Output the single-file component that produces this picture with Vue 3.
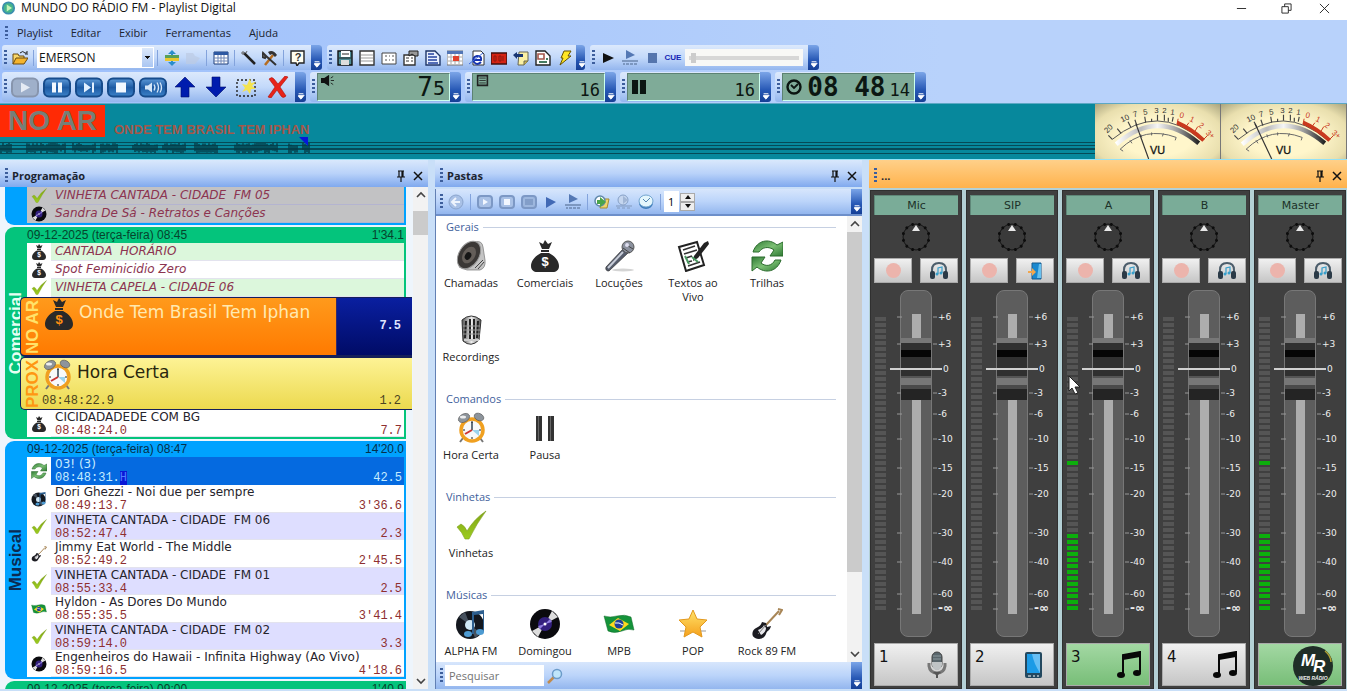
<script setup>
import { ref } from 'vue'

const menus = ['Playlist', 'Editar', 'Exibir', 'Ferramentas', 'Ajuda']
const user = ref('EMERSON')
const query = ref('')
const seek = ref(2)
const copies = ref('1')

const viewTools = [
  ['save', 'Salvar'], ['rows', 'Lista'], ['cells', 'Grade'], ['form', 'Formulário'], ['doc', 'Documento'],
  ['month', 'Calendário'], ['web', 'Internet'], ['red', 'Painel'], ['note', 'Notas'], ['report', 'Relatório'], ['bolt', 'Rápido'],
]
const transport = [
  ['play', 'Tocar'], ['pause', 'Pausar'], ['next', 'Próxima'], ['stop', 'Parar'], ['sound', 'Som'],
]
const listenTools = [
  ['fplay', 'Tocar'], ['fstop', 'Parar'], ['fgrid', 'Cartucheira'], ['playb', 'Ouvir'], ['cueplay', 'Ouvir no cue'],
]
const insertTools = [['refresh', 'Atualizar'], ['refresh2', 'Inserir'], ['time', 'Horário']]
const counters = [
  { icon: 'speaker', big: '7', small: '5' },
  { icon: 'lines', big: '', small: '16' },
  { icon: 'bars', big: '', small: '16' },
  { icon: 'clock', big: '08 48', small: '14' },
]

const pastRows = [
  { icon: 'check', name: 'VINHETA CANTADA - CIDADE  FM 05' },
  { icon: 'vinyl', name: 'Sandra De Sá - Retratos e Canções' },
]
const spots = [
  { icon: 'bag', name: 'CANTADA  HORÁRIO' },
  { icon: 'bag', name: 'Spot Feminicidio Zero' },
  { icon: 'check', name: 'VINHETA CAPELA - CIDADE 06' },
]
const songs = [
  { icon: 'cycle', name: '03! (3)', at: '08:48:31.', len: '42.5', active: true },
  { icon: 'alpha', name: 'Dori Ghezzi - Noi due per sempre', at: '08:49:13.7', len: "3'36.6" },
  { icon: 'check', name: 'VINHETA CANTADA - CIDADE  FM 06', at: '08:52:47.4', len: '2.3', tint: true },
  { icon: 'guitar', name: 'Jimmy Eat World - The Middle', at: '08:52:49.2', len: "2'45.5" },
  { icon: 'check', name: 'VINHETA CANTADA - CIDADE  FM 01', at: '08:55:33.4', len: '2.5', tint: true },
  { icon: 'flag', name: 'Hyldon - As Dores Do Mundo', at: '08:55:35.5', len: "3'41.4" },
  { icon: 'check', name: 'VINHETA CANTADA - CIDADE  FM 02', at: '08:59:14.0', len: '3.3', tint: true },
  { icon: 'vinyl', name: 'Engenheiros do Hawaii - Infinita Highway (Ao Vivo)', at: '08:59:16.5', len: "4'18.6" },
]

const folders = [
  { title: 'Gerais', items: [['cone', 'Chamadas'], ['bag', 'Comerciais'], ['mic', 'Locuções'], ['text', 'Textos ao Vivo'], ['cycle', 'Trilhas'], ['retro', 'Recordings']] },
  { title: 'Comandos', items: [['alarm', 'Hora Certa'], ['pausa', 'Pausa']] },
  { title: 'Vinhetas', items: [['check', 'Vinhetas']] },
  { title: 'Músicas', items: [['alpha', 'ALPHA FM'], ['vinyl', 'Domingou'], ['flag', 'MPB'], ['star', 'POP'], ['guitar', 'Rock 89 FM']] },
]

const channels = ref([
  { name: 'Mic', out: 'phones', num: '1', icon: 'studio', level: 83 },
  { name: 'SIP', out: 'door', num: '2', icon: 'phone', level: 83 },
  { name: 'A', out: 'phones', num: '3', icon: 'music', level: 83, live: true },
  { name: 'B', out: 'phones', num: '4', icon: 'music', level: 83 },
  { name: 'Master', out: 'phones', num: '', icon: '', level: 83, live: true },
])
const scale = [
  ['+6', 27], ['+3', 54], ['0', 79], ['-3', 103], ['-6', 124], ['-10', 149], ['-15', 178],
  ['-20', 204], ['-30', 243], ['-40', 272], ['-60', 304], ['-∞', 319],
]
const ledCount = 49
const isLit = (channel, n) => channel.live && (n > ledCount - 13 || n === ledCount - 24)

const bursts = [[0, 12], [26, 66], [72, 96], [100, 118], [132, 158], [162, 186], [194, 218], [234, 278], [288, 298], [302, 310]]
const wave = bursts.flatMap(([from, to]) => {
  const strokes = []
  for (let x = from; x < to; x += 2) {
    const up = 2 + Math.abs(Math.sin(x * x * 0.37)) * 3
    const down = 2 + Math.abs(Math.cos(x * x * 0.53)) * 3
    strokes.push(`M${x + 1} ${7 - up}V${7 + down}`)
  }
  return strokes
}).join('')
const knobDots = Array.from({ length: 12 }, (_, i) => i * 30)
const meters = [{ x1: 41, y1: 20, x2: 54 }, { x1: 34, y1: 20, x2: 51 }]
const meterMarks = [
  ['20', 15, 27, -45], ['10', 31, 17, -25], ['7', 41, 13, -15], ['5', 51, 11, -8], ['3', 62, 9, 0], ['2', 70, 9, 0], ['1', 78, 11, 8],
]
const meterHot = [['0', 87, 14, 15], ['1', 97, 18, 25], ['2', 106, 24, 35], ['3+', 115, 33, 40]]
</script>

<template>
  <div class="app">
    <svg class="sprite" width="0" height="0" aria-hidden="true">
      <defs>
        <linearGradient id="gGreen" x1="0" y1="0" x2="1" y2="1"><stop offset="0" stop-color="#2f7a34" /><stop offset=".5" stop-color="#7cc074" /><stop offset="1" stop-color="#2f7a34" /></linearGradient>
        <linearGradient id="gLime" x1="0" y1="0" x2="0" y2="1"><stop offset="0" stop-color="#7fa414" /><stop offset="1" stop-color="#9ccc20" /></linearGradient>
        <linearGradient id="gMetal"><stop offset="0" stop-color="#555" /><stop offset=".5" stop-color="#eee" /><stop offset="1" stop-color="#555" /></linearGradient>
        <linearGradient id="gStar" x1="0" y1="0" x2="0" y2="1"><stop offset="0" stop-color="#ffe36a" /><stop offset="1" stop-color="#f5a01c" /></linearGradient>
        <linearGradient id="gBlue" x1="0" y1="0" x2="0" y2="1"><stop offset="0" stop-color="#5d9ad8" /><stop offset=".5" stop-color="#1d5ba4" /><stop offset="1" stop-color="#3c82c8" /></linearGradient>
        <linearGradient id="gArc"><stop offset="0" stop-color="#fff" /><stop offset=".3" stop-color="#bbb" /><stop offset=".5" stop-color="#f5f5f5" /><stop offset=".75" stop-color="#999" /><stop offset="1" stop-color="#222" /></linearGradient>
      </defs>
      <symbol id="i-check" viewBox="0 0 32 32"><path d="M2 17l4-3q4 2 6 7Q19 9 31 1 22 13 14 29h-4Q7 22 2 17z" fill="url(#gLime)" stroke="#7c9d1c" stroke-width=".6" /></symbol>
      <symbol id="i-vinyl" viewBox="0 0 32 32"><circle cx="16" cy="16" r="15" fill="#0a0a0e" /><path d="M16 16L23 3l6 6zM16 16L9 29l-6-6z" fill="#ddd" /><circle cx="16" cy="16" r="7" fill="#33207e" /><path d="M16 16l5-5 2 3zM16 16l-5 5-2-3z" fill="#8f7be0" /><circle cx="16" cy="16" r="1.5" fill="#fff" /></symbol>
      <symbol id="i-bag" viewBox="0 0 32 32"><path d="M10 2l4 2 2-4 3 4 4-2-3 7h-7zM12 10h8v2h-8zM12 13h8c6 3 10 8 10 13 0 4-3 6-6 6H8c-3 0-6-2-6-6 0-5 4-10 10-13z" fill="#292929" /><text x="16" y="26" text-anchor="middle" font-family="Liberation Sans" font-weight="700" font-size="13" fill="currentColor">$</text></symbol>
      <symbol id="i-cycle" viewBox="0 0 32 32"><path d="M2 12C6 0 18-2 26 5l6-3v14H19l4-6c-5-4-12-3-15 2z" fill="url(#gGreen)" stroke="#2a6a2c" /><path d="M30 20C26 32 14 34 6 27l-5 4V17h13l-4 6c5 4 11 3 14-3z" fill="url(#gGreen)" stroke="#2a6a2c" /></symbol>
      <symbol id="i-alpha" viewBox="0 0 32 32"><circle cx="15" cy="17" r="14" fill="#14181f" /><path d="M15 17L4 9l6-5zM15 17l11 8-6 5z" fill="#46515e" /><circle cx="15" cy="17" r="5" fill="#cfe8f6" /><path d="M17 26V4l12-2v22h-1V6l-9 1v19z" fill="#2d5f8f" /><ellipse cx="13" cy="26" rx="4" ry="3" fill="#4d9bd2" /><ellipse cx="25" cy="24" rx="4" ry="3" fill="#4d9bd2" /></symbol>
      <symbol id="i-guitar" viewBox="0 0 32 32"><path d="M15 17L28 3M27 1l4 1-3 5" stroke="#a88657" stroke-width="2" fill="none" /><path d="M2 23c2-4 7-3 9-9l4 1 1 4 4-1c-1 5-4 4-5 8-2 5-7 6-11 4-3-2-3-4-2-7z" fill="#1c1c22" /><path d="M7 22q5-2 6-5l2 3q0 4-5 7z" fill="#e8e8ec" /><path d="M7 26l8-9" stroke="#777" /></symbol>
      <symbol id="i-flag" viewBox="0 0 32 32"><path d="M1 8q6 2 13 0 8-2 14 1l3 13q-6-2-12 1-8 3-14 0z" fill="#15933a" stroke="#0e6b28" stroke-width=".5" /><path d="M6 17l9-7 11 6-9 7z" fill="#ffd91e" /><circle cx="16" cy="16" r="4.5" fill="#20409a" /><path d="M12 15q4-1 8 2" stroke="#fff" fill="none" /></symbol>
      <symbol id="i-star" viewBox="0 0 32 32"><path d="M3 22h26v2H3z" fill="#ccc" /><path d="M16 2l4 9 10 1-7 7 2 10-9-5-9 5 2-10-7-7 10-1z" fill="url(#gStar)" stroke="#e2981d" /></symbol>
      <symbol id="i-pausa" viewBox="0 0 32 32"><path d="M7 4h6v25H7zM19 4h6v25h-6z" fill="#333" /><path d="M9 4h1v25H9zM21 4h1v25h-1z" fill="#666" /></symbol>
      <symbol id="i-alarm" viewBox="0 0 32 32"><path d="M8 26l-3 4M25 26l3 4" stroke="#777" stroke-width="2" /><circle cx="17" cy="18" r="11" fill="#f8f9fa" stroke="#f0a020" stroke-width="3.5" /><ellipse cx="9" cy="6" rx="6" ry="4" transform="rotate(-30 9 6)" fill="#8d949b" stroke="#555" stroke-width=".6" /><ellipse cx="24" cy="5" rx="5" ry="3.5" transform="rotate(25 24 5)" fill="#8d949b" stroke="#555" stroke-width=".6" /><ellipse cx="8" cy="5" rx="3" ry="1.5" fill="#eee" /><path d="M17 18h7v6z" fill="#9bd3ee" /><path d="M17 10v8" stroke="#345" stroke-width="1.5" /><path d="M17 18l-7 4" stroke="#c33" stroke-width="2" /><path d="M17 9v2M17 25v2M8 18h2M24 18h2" stroke="#222" /></symbol>
      <symbol id="i-cone" viewBox="0 0 32 32"><path d="M20 2q7-2 8 5l2 13q1 8-5 10H12l-8-3z" fill="#c4c4c4" stroke="#777" stroke-width=".7" /><ellipse cx="14" cy="15" rx="10" ry="15" transform="rotate(32 14 15)" fill="#3b3836" stroke="#999" /><ellipse cx="14" cy="15" rx="6" ry="9" transform="rotate(32 14 15)" fill="#645e59" /><ellipse cx="13" cy="16" rx="3" ry="4" transform="rotate(32 13 16)" fill="#151515" /><path d="M20 28l8-8M23 29l6-7" stroke="#444" /></symbol>
      <symbol id="i-mic" viewBox="0 0 32 32"><ellipse cx="20" cy="30" rx="11" ry="1.5" fill="#d4d4d4" /><path d="M20 9l5 4L6 31q-4 0-3-4z" fill="#555c6c" stroke="#333" stroke-width=".7" /><path d="M20 12L5 28" stroke="#c8cdd8" stroke-width="2" /><circle cx="25" cy="7" r="6" fill="#8b919e" stroke="#555" /><path d="M20 8l7 5M22 4l8 5" stroke="#444" /><circle cx="24" cy="5" r="2" fill="#dde" /></symbol>
      <symbol id="i-text" viewBox="0 0 32 32"><path d="M2 7l18-5 7 23-18 6z" fill="#fff" stroke="#222" stroke-width="2" /><path d="M6 10l12-4M7 14l13-4M9 18l6-2M10 22l5-1M11 26l12-4" stroke="#333" stroke-width="1.7" /><path d="M16 21l1-5L27 3l4-2 1 3-11 14z" fill="#222" /><path d="M15 17l6 5M8 16l4 8" stroke="#4b9a62" stroke-width="2" /></symbol>
      <symbol id="i-retro" viewBox="0 0 32 32"><path d="M7 6q9-8 19 0l-2 20q-8 8-16 1z" fill="url(#gMetal)" stroke="#333" /><path d="M11 7l-1 17M15 5v20M19 5v20M23 7l-1 17" stroke="#222" stroke-width="2" /><path d="M8 12h17M8 16h17M8 20h17" stroke="#999" /><path d="M9 26h15" stroke="#ccc" stroke-width="2" /></symbol>

      <symbol id="i-logo" viewBox="0 0 16 16"><circle cx="8" cy="8" r="7.5" fill="#3b8fae" /><circle cx="8" cy="8" r="5.5" fill="#46b58b" /><path d="M6 4l6 4-6 4z" fill="#c7f3b8" /></symbol>
      <symbol id="i-open" viewBox="0 0 16 16"><path d="M1 14V4h5l1 2h5v3H5z" fill="#f8d76a" stroke="#6b4b10" /><path d="M1 14l3-6h12l-4 6z" fill="#f5b42c" stroke="#6b4b10" /><path d="M8 3q3-3 5 0h2v-2M13 4h3" stroke="#222" fill="none" /></symbol>
      <symbol id="i-updown" viewBox="0 0 16 16"><path d="M8 0l4 4h-3v3H7V4H4zM8 16l4-4h-3V9H7v3H4z" fill="#2a8ecb" /><path d="M1 5h14v3H1z" fill="#58a05a" /><path d="M1 8h14v3H1z" fill="#e9c62e" /></symbol>
      <symbol id="i-faded" viewBox="0 0 16 16"><path d="M1 3h7l2 3 5 2-5 6H1z" fill="#bccbe2" opacity=".7" /></symbol>
      <symbol id="i-table" viewBox="0 0 16 16"><path d="M1 2h14v12H1z" fill="#fff" stroke="#1d3c78" /><path d="M1 2h14v3H1z" fill="#2d58a2" /><path d="M1 8h14M1 11h14M5 5v9M8 5v9M11 5v9" stroke="#6e87b7" /></symbol>
      <symbol id="i-wand" viewBox="0 0 16 16"><path d="M3 3l11 11" stroke="#222" stroke-width="2.5" /><path d="M2 1v4M0 3h4M6 1l-1 2" stroke="#666" /></symbol>
      <symbol id="i-tools" viewBox="0 0 16 16"><path d="M3 15L11 5" stroke="#b56d20" stroke-width="2.5" /><path d="M6 2q5-3 9 3l-2 2-3-3-2 1z" fill="#333" /><path d="M1 3l3 3-1 2-3-1zM4 6l10 9" stroke="#333" stroke-width="2" fill="#777" /></symbol>
      <symbol id="i-help" viewBox="0 0 16 16"><path d="M1 1h13v12H9l-2 3-1-3H1z" fill="#fffef0" stroke="#222" stroke-width="1.4" /><text x="8" y="11" text-anchor="middle" font-family="Liberation Sans" font-size="11" font-weight="700" fill="#333">?</text></symbol>
      <symbol id="i-save" viewBox="0 0 16 16"><path d="M1 1h14v14H1z" fill="#4f8d96" stroke="#111" stroke-width="1.4" /><path d="M4 1h9v6H4z" fill="#fff" /><path d="M4 10h8v5H4z" fill="#ddd" /><path d="M5 4h7M2 8h12" stroke="#222" /></symbol>
      <symbol id="i-rows" viewBox="0 0 16 16"><path d="M1 1h14v14H1z" fill="#fff" stroke="#333" stroke-width="1.4" /><path d="M2 5h12M2 8h12M2 11h12" stroke="#999" /></symbol>
      <symbol id="i-cells" viewBox="0 0 16 16"><path d="M1 3h14v11H1z" fill="#fff" stroke="#444" /><path d="M4 6h2M8 6h1M11 6h2M4 10h2M8 10h1M11 10h2" stroke="#555" /></symbol>
      <symbol id="i-form" viewBox="0 0 16 16"><path d="M1 5h11v10H1z" fill="#fff" stroke="#333" stroke-width="1.4" /><path d="M3 8h3M8 8h2M3 11h3M8 11h2" stroke="#333" /><path d="M6 1h9v5h-3L9 4 6 6z" fill="#999" stroke="#222" /></symbol>
      <symbol id="i-doc" viewBox="0 0 16 16"><path d="M1 1h9l5 5v9H1z" fill="#e9f0ff" stroke="#1e3568" stroke-width="1.4" /><path d="M3 4h6M3 7h9M3 10h9M3 13h10" stroke="#2341a0" stroke-width="1.4" /></symbol>
      <symbol id="i-month" viewBox="0 0 16 16"><path d="M0 1h16v14H0z" fill="#fff" stroke="#777" /><path d="M0 1h16v3H0z" fill="#5276b6" /><path d="M1 7h14M1 11h14M4 4v10M8 4v10M12 4v10" stroke="#aaa" /><path d="M6 6h6v5H6z" fill="#e0412c" /></symbol>
      <symbol id="i-web" viewBox="0 0 16 16"><path d="M4 1h8l3 3v11H4z" fill="#fff" stroke="#333" /><path d="M12 12q-4 4-7 0-2-5 3-6 5 0 4 4H5" stroke="#1633ae" stroke-width="2" fill="none" /><path d="M0 14L14 3" stroke="#3e68d8" /></symbol>
      <symbol id="i-red" viewBox="0 0 16 16"><path d="M0 3h16v11H0z" fill="#d42314" stroke="#401010" stroke-width="1.4" /><path d="M3 6h2v5H3zM8 6h2v5H8zM12 6v5" stroke="#8f1810" fill="none" /></symbol>
      <symbol id="i-note" viewBox="0 0 16 16"><path d="M6 2h9v9l-4 4H5z" fill="#fbf1a4" stroke="#665" /><path d="M0 5l4-3v2h6v3H4v2z" fill="#173573" /><path d="M11 15v-4h4" fill="#ccb64c" stroke="#665" /></symbol>
      <symbol id="i-report" viewBox="0 0 16 16"><path d="M1 1h9l5 5v9H1z" fill="#fff" stroke="#222" stroke-width="1.4" /><path d="M3 4h6v5H3z" fill="#fff" stroke="#a5564a" stroke-width="1.6" /><path d="M4 12h8M11 9h2" stroke="#467c62" stroke-width="2" /></symbol>
      <symbol id="i-bolt" viewBox="0 0 16 16"><path d="M7 1h7l-3 5h3L3 15l3-7H4z" fill="#ffe624" stroke="#665200" /></symbol>
      <symbol id="i-playk" viewBox="0 0 16 16"><path d="M3 3l11 5-11 5z" fill="#111" /></symbol>
      <symbol id="i-playb" viewBox="0 0 16 16"><path d="M3 3l10 5-10 6z" fill="#4169b5" /></symbol>
      <symbol id="i-cueplay" viewBox="0 0 16 16"><path d="M4 0l9 5-9 4z" fill="#5478b4" /><path d="M0 11h16M1 14h2M4 14h3M8 14h3M12 14h3" stroke="#6c86ae" stroke-width="1.5" /></symbol>
      <symbol id="i-square" viewBox="0 0 16 16"><path d="M4 3h9v10H4z" fill="#5575ad" /></symbol>
      <symbol id="i-up" viewBox="0 0 22 22"><path d="M11 1l10 10h-6v10H7V11H1z" fill="#001cae" stroke="#000e6c" stroke-width=".6" /></symbol>
      <symbol id="i-down" viewBox="0 0 22 22"><path d="M11 21L1 11h6V1h8v10h6z" fill="#001cae" stroke="#000e6c" stroke-width=".6" /></symbol>
      <symbol id="i-area" viewBox="0 0 22 22"><path d="M1 4h18v16H1z" fill="none" stroke="#222" stroke-width="1.4" stroke-dasharray="2 2" /><path d="M14 2l1 5 5-1-4 4 4 3-5 0-1 5-3-4-5 2 3-4-3-4 5 1z" fill="#f3e350" /></symbol>
      <symbol id="i-cross" viewBox="0 0 22 22"><path d="M2 3q3-3 5 0l4 5 7-8 3 1-8 10 6 9q-3 3-5 0l-4-6-6 8-3-1 7-10z" fill="#e8231a" stroke="#ab1008" stroke-width=".6" /></symbol>
      <symbol id="i-play" viewBox="0 0 28 20"><rect x="1" y="1" width="26" height="18" rx="5" fill="#9fb0ca" stroke="#8795ad" stroke-width="2" /><path d="M10 5l9 5-9 5z" fill="#e5ebf4" /></symbol>
      <symbol id="i-pause" viewBox="0 0 28 20"><rect x="1" y="1" width="26" height="18" rx="5" fill="url(#gBlue)" stroke="#174c8c" stroke-width="2" /><path d="M9 5h4v10H9zM15 5h4v10h-4z" fill="#f1f8ff" /></symbol>
      <symbol id="i-next" viewBox="0 0 28 20"><rect x="1" y="1" width="26" height="18" rx="5" fill="url(#gBlue)" stroke="#174c8c" stroke-width="2" /><path d="M9 5l7 5-7 5zM17 5h2v10h-2z" fill="#e1f0ff" /></symbol>
      <symbol id="i-stop" viewBox="0 0 28 20"><rect x="1" y="1" width="26" height="18" rx="5" fill="url(#gBlue)" stroke="#174c8c" stroke-width="2" /><path d="M9 5h10v10H9z" fill="#f1f8ff" /></symbol>
      <symbol id="i-sound" viewBox="0 0 28 20"><rect x="1" y="1" width="26" height="18" rx="5" fill="url(#gBlue)" stroke="#174c8c" stroke-width="2" /><path d="M6 8h3l4-3v10l-4-3H6z" fill="#d4e6f8" /><path d="M15 7q2 3 0 6M18 5q3 5 0 10M21 5q3 5 0 10" stroke="#d4e6f8" fill="none" stroke-width="1.3" /></symbol>
      <symbol id="i-speaker" viewBox="0 0 16 16"><path d="M0 5h4l6-4v14l-6-4H0z" fill="#111" /><path d="M12 5l3-2M12 8h4M12 11l3 2" stroke="#111" /></symbol>
      <symbol id="i-lines" viewBox="0 0 16 16"><path d="M2 2h12v12H2z" fill="none" stroke="#222" stroke-width="2" /><path d="M4 5h8M4 8h8M4 11h8" stroke="#222" /></symbol>
      <symbol id="i-bars" viewBox="0 0 16 16"><path d="M1 1h6v14H1zM9 1h6v14H9z" fill="#0b1511" /></symbol>
      <symbol id="i-clock" viewBox="0 0 16 16"><circle cx="8" cy="8" r="6.5" fill="none" stroke="#0b1511" stroke-width="2.4" /><path d="M5 6l3 3 4-4" fill="none" stroke="#0b1511" stroke-width="1.8" /></symbol>
      <symbol id="i-more" viewBox="0 0 10 10"><path d="M2 2h6M2 4v2l3 3 4-5z" stroke="#fff" fill="#fff" /></symbol>
      <symbol id="i-pin" viewBox="0 0 12 12"><path d="M3 1h6M4 1v6M8 1v6M7 1v6M2 7h8M6 7v5" stroke="#111" stroke-width="1.2" /></symbol>
      <symbol id="i-x" viewBox="0 0 12 12"><path d="M2 2l8 8M10 2l-8 8" stroke="#111" stroke-width="1.5" /></symbol>
      <symbol id="i-back" viewBox="0 0 16 16"><circle cx="8" cy="8" r="7" fill="#a9c1e6" stroke="#8aa4cd" /><path d="M12 8H5M8 4L4 8l4 4" stroke="#eef4fd" stroke-width="2" fill="none" /></symbol>
      <symbol id="i-fplay" viewBox="0 0 16 16"><rect x="1" y="2" width="14" height="12" rx="3" fill="#a9c1e6" stroke="#7c98c5" stroke-width="2" /><path d="M6 5l5 3-5 3z" fill="#f2f7ff" /></symbol>
      <symbol id="i-fstop" viewBox="0 0 16 16"><rect x="1" y="2" width="14" height="12" rx="3" fill="#a9c1e6" stroke="#7c98c5" stroke-width="2" /><path d="M5 5h6v6H5z" fill="#f2f7ff" /></symbol>
      <symbol id="i-fgrid" viewBox="0 0 16 16"><rect x="1" y="2" width="14" height="12" rx="3" fill="#9db7de" stroke="#7c98c5" stroke-width="2" /><path d="M4 6h8M4 8h8M4 10h8" stroke="#6985b3" /></symbol>
      <symbol id="i-refresh" viewBox="0 0 16 16"><path d="M7 5h8l-2 9H6z" fill="#efd56a" stroke="#a58a32" /><circle cx="6" cy="7" r="5" fill="#fff" stroke="#5f87aa" stroke-width="1.5" /><path d="M6 3l6 5-6 5V10H3V6h3z" fill="#4aa54a" /></symbol>
      <symbol id="i-refresh2" viewBox="0 0 16 16"><circle cx="7" cy="6" r="5" fill="#c5d6ef" stroke="#86a0c6" /><path d="M7 2l5 4-5 4z" fill="#a1b6d5" /><path d="M0 12h16M1 14h3M6 14h3M11 14h3" stroke="#8299bd" /></symbol>
      <symbol id="i-time" viewBox="0 0 16 16"><ellipse cx="8" cy="9" rx="7" ry="6" fill="#3e7cba" /><ellipse cx="8" cy="7" rx="7" ry="6" fill="#e4f6fc" stroke="#73a5cf" /><path d="M5 5l3 3 4-4" stroke="#5486b2" fill="none" /></symbol>
      <symbol id="i-lens" viewBox="0 0 16 16"><path d="M1 15l6-6" stroke="#c18c4e" stroke-width="2.5" /><circle cx="10" cy="6" r="4.5" fill="#bfe5fa" stroke="#6b9bc9" stroke-width="1.5" /></symbol>
      <symbol id="i-phones" viewBox="0 0 20 18"><path d="M3 11V8q0-7 7-7t7 7v3" stroke="#4c5d6b" stroke-width="2" fill="none" /><rect x="1" y="9" width="5" height="8" rx="2" fill="#2b3a47" /><rect x="14" y="9" width="5" height="8" rx="2" fill="#2b3a47" /><path d="M9 12V6l4-1v6" stroke="#389fcb" stroke-width="1.2" fill="none" /><circle cx="8" cy="12" r="1.5" fill="#389fcb" /><circle cx="12" cy="11" r="1.5" fill="#389fcb" /></symbol>
      <symbol id="i-door" viewBox="0 0 20 18"><path d="M7 1h9v16H7z" fill="#1988cf" stroke="#165b8e" /><path d="M14 2h2v14h-4z" fill="#68c1ef" /><path d="M3 9h4V6l4 4-4 4v-3H3z" fill="#f2a64d" /></symbol>
      <symbol id="i-studio" viewBox="0 0 28 28"><rect x="9" y="1" width="10" height="17" rx="5" fill="#59666c" stroke="#444" /><path d="M10 5h8M10 8h8" stroke="#8d999e" /><path d="M9 11h10v3q-1 5-5 5t-5-5z" fill="#bfc3c5" /><path d="M6 12v3q1 7 8 7t8-7v-3" stroke="#777" stroke-width="3" fill="none" /><path d="M10 21h8l-3 3v3h-2v-3z" fill="#555" /></symbol>
      <symbol id="i-phone" viewBox="0 0 28 28"><rect x="6" y="1" width="17" height="26" rx="2" fill="#23485f" /><path d="M8 3h13v19H8z" fill="#1c9be6" /><path d="M13 3h8v19q-6-9-8-19z" fill="#67bff4" /><path d="M9 25h3M14 25h2M18 25h2" stroke="#fff" /></symbol>
      <symbol id="i-music" viewBox="0 0 28 28"><path d="M8 24V4l17-3v20" stroke="#080808" stroke-width="2" fill="none" /><path d="M8 4l17-3v5L8 9z" fill="#080808" /><ellipse cx="6" cy="24" rx="4" ry="3" fill="#080808" /><ellipse cx="22" cy="22" rx="4" ry="3" fill="#080808" /></symbol>
    </svg>

    <header class="title">
      <svg class="s16"><use href="#i-logo" /></svg>
      <h1>MUNDO DO RÁDIO FM - Playlist Digital</h1>
      <button class="win" aria-label="Minimizar"><svg viewBox="0 0 12 12"><path d="M1 6h10" /></svg></button>
      <button class="win" aria-label="Restaurar"><svg viewBox="0 0 12 12"><path d="M1 4h7v7H1zM4 4V1h7v7H8" /></svg></button>
      <button class="win" aria-label="Fechar"><svg viewBox="0 0 12 12"><path d="M1 1l10 10M11 1L1 11" /></svg></button>
    </header>

    <nav class="menu">
      <i class="grip"></i>
      <button v-for="m in menus" :key="m">{{ m }}</button>
    </nav>

    <div class="bars">
      <div class="line one">
        <div class="bar files">
          <i class="grip"></i>
          <button aria-label="Abrir"><svg class="s16"><use href="#i-open" /></svg></button>
          <i class="sep"></i>
          <select v-model="user" aria-label="Usuário"><option>EMERSON</option></select>
          <i class="sep"></i>
          <button aria-label="Intervalo"><svg class="s16"><use href="#i-updown" /></svg></button>
          <button aria-label="Inserir" disabled><svg class="s16"><use href="#i-faded" /></svg></button>
          <i class="sep"></i>
          <button aria-label="Tabela"><svg class="s16"><use href="#i-table" /></svg></button>
          <i class="sep"></i>
          <button aria-label="Assistente"><svg class="s16"><use href="#i-wand" /></svg></button>
          <button aria-label="Configurações"><svg class="s16"><use href="#i-tools" /></svg></button>
          <i class="sep"></i>
          <button aria-label="Ajuda"><svg class="s16"><use href="#i-help" /></svg></button>
          <button class="more" aria-label="Mais opções"><svg><use href="#i-more" /></svg></button>
        </div>
        <div class="bar views">
          <i class="grip"></i>
          <button v-for="[icon, label] in viewTools" :key="icon" :aria-label="label"><svg class="s16"><use :href="'#i-' + icon" /></svg></button>
          <button class="more" aria-label="Mais opções"><svg><use href="#i-more" /></svg></button>
        </div>
        <div class="bar cue">
          <i class="grip"></i>
          <button aria-label="Ouvir"><svg class="s16"><use href="#i-playk" /></svg></button>
          <button aria-label="Ouvir no cue"><svg class="s16"><use href="#i-cueplay" /></svg></button>
          <button aria-label="Parar"><svg class="s16"><use href="#i-square" /></svg></button>
          <button class="cuebtn">CUE</button>
          <input v-model="seek" class="seek" type="range" min="0" max="100" aria-label="Posição">
          <button class="more" aria-label="Mais opções"><svg><use href="#i-more" /></svg></button>
        </div>
      </div>
      <div class="line two">
        <div class="bar deckbar">
          <i class="grip"></i>
          <button v-for="[icon, label] in transport" :key="icon" :aria-label="label"><svg class="pill"><use :href="'#i-' + icon" /></svg></button>
          <button aria-label="Subir"><svg class="s22"><use href="#i-up" /></svg></button>
          <button aria-label="Descer"><svg class="s22"><use href="#i-down" /></svg></button>
          <button aria-label="Selecionar"><svg class="s22"><use href="#i-area" /></svg></button>
          <button aria-label="Remover"><svg class="s22"><use href="#i-cross" /></svg></button>
          <button class="more" aria-label="Mais opções"><svg><use href="#i-more" /></svg></button>
        </div>
        <div v-for="c in counters" :key="c.icon" class="bar">
          <i class="grip"></i>
          <output class="lcd" :class="c.icon">
            <svg class="s16"><use :href="'#i-' + c.icon" /></svg>
            <span v-if="c.big" class="big">{{ c.big }}</span><span class="small">{{ c.small }}</span>
          </output>
          <button class="more" aria-label="Mais opções"><svg><use href="#i-more" /></svg></button>
        </div>
      </div>
    </div>

    <section class="onair">
      <div class="playing">
        <p><strong>NO AR</strong><span>ONDE TEM BRASIL TEM IPHAN</span></p>
        <div class="waveform">
          <svg class="wave" viewBox="0 0 310 14"><path :d="wave" stroke="#053b46" stroke-width="1.4" /></svg>
          <svg class="marker" viewBox="0 0 12 12"><path d="M0 0h9v9z" fill="#0618d8" /></svg>
        </div>
      </div>
      <svg v-for="(m, i) in meters" :key="i" class="vu" viewBox="0 0 126 56">
        <path d="M17 36Q63 -2 108 37" fill="none" stroke="#555" stroke-width="1" />
        <path d="M17 36l-4-4M26 30l-4-5M36 24l-3-6M42 22l-2-6M51 19l-1-6M57 18v-3M63 17v-6M70 17v-6M74 18v-4M78 18l1-5" stroke="#444" stroke-width="1.2" />
        <path d="M83 19Q97 25 110 37" fill="none" stroke="#c9391e" stroke-width="4" />
        <path d="M83 20l1-5M92 23l3-4M101 28l3-5M110 36l4-4" stroke="#c9391e" />
        <path d="M21 41Q63 4 105 40" fill="none" stroke="url(#gArc)" stroke-width="4.5" />
        <path d="M25 46Q50 22 82 34" fill="none" stroke="#666" stroke-width="1" />
        <path d="M25 46l3 2M35 37l2 3M46 31l1 3M57 29v3M69 30l-1 3M82 34l-1 3" stroke="#666" />
        <path :d="`M${m.x1} ${m.y1}L${m.x2} 56`" stroke="#333" stroke-width="1.2" />
        <text v-for="[t, x, y, a] in meterMarks" :key="t" :x="x" :y="y" :transform="`rotate(${a} ${x} ${y})`" class="mark">{{ t }}</text>
        <text v-for="[t, x, y, a] in meterHot" :key="t" :x="x" :y="y" :transform="`rotate(${a} ${x} ${y})`" class="mark hot">{{ t }}</text>
        <text x="63" y="51" class="vulabel">VU</text>
      </svg>
    </section>

    <main class="panels">
      <section class="panel">
        <header class="phead"><i class="grip"></i><h2>Programação</h2>
          <button aria-label="Fixar"><svg><use href="#i-pin" /></svg></button><button aria-label="Fechar painel"><svg><use href="#i-x" /></svg></button>
        </header>
        <div class="schedule">
          <div class="blocks">
            <article class="block music past">
              <div class="rail"></div>
              <div class="rows">
                <div v-for="r in pastRows" :key="r.name" class="row">
                  <svg class="s16"><use :href="'#i-' + r.icon" /></svg><div class="cell"><p class="played">{{ r.name }}</p></div>
                </div>
              </div>
            </article>
            <article class="block ads">
              <div class="rail"><span>Comercial</span></div>
              <div class="rows">
                <h3>09-12-2025 (terça-feira) 08:45<span>1'34.1</span></h3>
                <div v-for="(r, i) in spots" :key="r.name" class="row">
                  <svg class="s16"><use :href="'#i-' + r.icon" /></svg><div class="cell" :class="{ mint: i !== 1 }"><p class="played">{{ r.name }}</p></div>
                </div>
                <div class="card now">
                  <b>NO AR</b>
                  <svg class="s32"><use href="#i-bag" /></svg><p>Onde Tem Brasil Tem Iphan</p>
                  <div class="left"><time>7.5</time></div>
                </div>
                <div class="card soon">
                  <b>PROX</b>
                  <svg class="s32"><use href="#i-alarm" /></svg><p>Hora Certa</p>
                  <div class="times"><time>08:48:22.9</time><time>1.2</time></div>
                </div>
                <div class="row">
                  <svg class="s16"><use href="#i-bag" /></svg>
                  <div class="cell"><p>CICIDADADEDE COM BG</p><div class="times"><time>08:48:24.0</time><time>7.7</time></div></div>
                </div>
              </div>
            </article>
            <article class="block music">
              <div class="rail"><span>Musical</span></div>
              <div class="rows">
                <h3>09-12-2025 (terça-feira) 08:47<span>14'20.0</span></h3>
                <div v-for="s in songs" :key="s.at" class="row">
                  <svg class="s16"><use :href="'#i-' + s.icon" /></svg>
                  <div class="cell" :class="{ tint: s.tint, active: s.active }">
                    <p>{{ s.name }}</p>
                    <div class="times"><time>{{ s.at }}<mark v-if="s.active">H</mark></time><time>{{ s.len }}</time></div>
                  </div>
                </div>
              </div>
            </article>
            <article class="block ads">
              <div class="rail"></div>
              <div class="rows"><h3>09-12-2025 (terça-feira) 09:00<span>1'40.9</span></h3></div>
            </article>
          </div>
          <div class="scroll top"><svg viewBox="0 0 12 12"><path d="M2 8l4-4 4 4" /></svg><i></i><svg viewBox="0 0 12 12"><path d="M2 4l4 4 4-4" /></svg></div>
        </div>
      </section>

      <section class="panel">
        <header class="phead"><i class="grip"></i><h2>Pastas</h2>
          <button aria-label="Fixar"><svg><use href="#i-pin" /></svg></button><button aria-label="Fechar painel"><svg><use href="#i-x" /></svg></button>
        </header>
        <div class="folders">
          <div class="fbar">
            <i class="grip"></i>
            <button aria-label="Voltar"><svg class="s16"><use href="#i-back" /></svg></button>
            <i class="sep"></i>
            <button v-for="[icon, label] in listenTools" :key="icon" :aria-label="label"><svg class="s16"><use :href="'#i-' + icon" /></svg></button>
            <i class="sep"></i>
            <button v-for="[icon, label] in insertTools" :key="icon" :aria-label="label"><svg class="s16"><use :href="'#i-' + icon" /></svg></button>
            <i class="sep"></i>
            <input v-model="copies" type="text" aria-label="Quantidade">
            <span class="spin">
              <button aria-label="Aumentar"><svg viewBox="0 0 8 4"><path d="M4 0l3 4H1z" /></svg></button>
              <button aria-label="Diminuir"><svg viewBox="0 0 8 4"><path d="M4 4l3-4H1z" /></svg></button>
            </span>
            <button class="more" aria-label="Mais opções"><svg><use href="#i-more" /></svg></button>
          </div>
          <div class="fbody">
            <div class="groups">
              <section v-for="g in folders" :key="g.title" class="group">
                <h3>{{ g.title }}</h3>
                <div class="items">
                  <button v-for="[icon, label] in g.items" :key="label"><svg class="s32"><use :href="'#i-' + icon" /></svg><span>{{ label }}</span></button>
                </div>
              </section>
            </div>
            <div class="scroll long"><svg viewBox="0 0 12 12"><path d="M2 8l4-4 4 4" /></svg><i></i><svg viewBox="0 0 12 12"><path d="M2 4l4 4 4-4" /></svg></div>
          </div>
          <div class="fbar find">
            <i class="grip"></i>
            <input v-model="query" class="search" type="text" placeholder="Pesquisar" aria-label="Pesquisar">
            <button aria-label="Buscar"><svg class="s16"><use href="#i-lens" /></svg></button>
            <button class="more" aria-label="Mais opções"><svg><use href="#i-more" /></svg></button>
          </div>
        </div>
      </section>

      <section class="panel mixer">
        <header class="phead hot"><i class="grip"></i><h2>...</h2>
          <button aria-label="Fixar"><svg><use href="#i-pin" /></svg></button><button aria-label="Fechar painel"><svg><use href="#i-x" /></svg></button>
        </header>
        <div class="strips">
          <article v-for="c in channels" :key="c.name" class="strip">
            <h3>{{ c.name }}</h3>
            <svg class="knob" viewBox="0 0 30 30">
              <circle cx="15" cy="15" r="13" fill="#3a3a3a" stroke="#151515" />
              <circle v-for="a in knobDots" :key="a" cx="15" cy="2" r="1.5" fill="#0c0c0c" :transform="`rotate(${a + 15} 15 15)`" />
              <path d="M15 3l4 6h-8z" fill="#e8e8e8" />
            </svg>
            <div class="pair">
              <button :aria-label="'Gravar ' + c.name"><i class="rec"></i></button>
              <button :aria-label="'Saída ' + c.name"><svg><use :href="'#i-' + c.out" /></svg></button>
            </div>
            <div class="level">
              <div class="leds"><i v-for="n in ledCount" :key="n" :class="{ lit: isLit(c, n) }"></i></div>
              <div class="track">
                <input v-model="c.level" class="fader" type="range" min="0" max="100" :aria-label="'Volume ' + c.name">
              </div>
              <svg class="scale" viewBox="0 0 60 347">
                <g v-for="[t, y] in scale" :key="t">
                  <path :d="`M0 ${y}h5M36 ${y}h4`" stroke="#999" />
                  <text :x="t === '0' ? 46 : 41" :y="y + 3" :class="{ inf: t === '-∞' }">{{ t }}</text>
                </g>
              </svg>
            </div>
            <button class="cart" :class="{ live: c.live }" :aria-label="'Canal ' + c.name">
              <span>{{ c.num }}</span>
              <svg v-if="c.icon"><use :href="'#i-' + c.icon" /></svg>
              <svg v-else class="badge" viewBox="0 0 40 40"><circle cx="20" cy="20" r="20" fill="#202e27" /><path d="M32 5q6 5 6 11" stroke="#b0a232" stroke-width="1.5" fill="none" /><text x="8" y="20" class="mr">M</text><text x="20" y="26" class="mr">R</text><text x="20" y="34" class="web">WEB RÁDIO</text></svg>
            </button>
          </article>
        </div>
        <svg class="pointer" viewBox="0 0 12 20"><path d="M1 1v15l3-3 3 6 3-1-3-6h5z" fill="#fff" stroke="#222" /></svg>
      </section>
    </main>
  </div>
</template>

<style>
html, body { margin: 0; background: #b5d3f3; }
body { overflow: hidden; }
</style>

<style scoped>
.app { display: flex; flex-direction: column; height: 100vh; overflow: hidden; background: linear-gradient(90deg, #9dbffb, #b8d2fb 70%); font: 11px/14px "Open Sans", "Noto Sans", sans-serif; color: #1c2430; }
.app * { box-sizing: border-box; }
.sprite { position: absolute; }
h1, h2, h3, p { margin: 0; font-size: inherit; font-weight: inherit; }
button { display: flex; align-items: center; justify-content: center; padding: 0; border: 0; background: none; font: inherit; color: inherit; }
i { font-style: normal; }
.s16 { width: 16px; height: 16px; flex: none; }
.s22 { width: 22px; height: 22px; }
.s32 { width: 32px; height: 32px; flex: none; color: #fff; }

.title { display: flex; align-items: center; height: 20px; padding: 0 8px 4px 1px; background: #fff; color: #111; flex: none; }
.title h1 { flex: 1; padding-left: 5px; font-size: 12px; line-height: 16px; }
.title .s16 { width: 15px; height: 14px; }
.win { width: 45px; }
.win:last-child { width: 30px; }
.win svg { width: 11px; height: 11px; fill: none; stroke: #222; }

.grip { width: 3px; height: 16px; flex: none; background: repeating-linear-gradient(#3d5e9c 0 2px, transparent 2px 4px); margin: 0 2px; }
.menu { display: flex; align-items: center; height: 25px; padding: 0 3px; flex: none; }
.menu button { padding: 0 9px; }
.menu .grip { height: 13px; margin-right: 0; }

.bars { padding-left: 2px; flex: none; }
.line { display: flex; gap: 5px; }
.one { height: 27px; padding-bottom: 2px; }
.two { height: 31px; gap: 4px; padding-bottom: 1px; }
.bar { display: flex; align-items: center; border-radius: 3px; background: linear-gradient(#dce9fc, #c3d9fa 50%, #94b6ee); overflow: hidden; }
.bar > button { flex: none; width: 22px; }
.sep { width: 1px; height: 16px; margin: 0 3px; background: #83a3dc; flex: none; }
.bar .more, .fbar .more { width: 11px; height: 100%; flex: none; align-items: flex-end; margin-left: auto; background: linear-gradient(#7ba5e8, #2758b5 60%, #163f95); }
.more svg { width: 8px; height: 8px; margin-bottom: 2px; }
.files { width: 320px; }
.files > button { width: 21px; }
.files select { flex: none; width: 117px; height: 21px; padding: 0 2px; border: 0; border-radius: 0; font: inherit; font-size: 12px; color: #111; appearance: none; background: linear-gradient(#111, #111) 108px 9px / 5px 1px no-repeat, linear-gradient(#111, #111) 109px 10px / 3px 1px no-repeat, linear-gradient(#111, #111) 110px 11px / 1px 1px no-repeat, linear-gradient(#dce8fa, #aac6f2) 105px 1px / 11px 19px no-repeat, #fff; }
.views { width: 258px; }
.cue { width: 229px; }
.cuebtn { color: #1524b4; font: 700 8px/12px "Liberation Sans", sans-serif; }
.bar > .cuebtn { width: 20px; }
.seek { appearance: none; width: 118px; height: 17px; margin: 0 0 0 2px; padding: 0 4px; background: linear-gradient(#d7d7d7, #d7d7d7) 50% 50% / 110px 4px no-repeat, #f8f8f6; }
.seek::-webkit-slider-thumb { appearance: none; width: 5px; height: 10px; background: #ccc; }
.deckbar { width: 304px; }
.deckbar > button { width: 32px; }
.deckbar > button:nth-of-type(n+6) { width: 31px; }
.pill { width: 28px; height: 21px; }
.deckbar > .more:last-child { width: 11px; }
.lcd { display: flex; align-items: center; width: 133px; height: 28px; padding: 0 4px 0 3px; background: #7fab98; border: 1px solid #5c8273; border-right-color: #cfe; border-bottom-color: #cfe; color: #0c1712; font-family: "DejaVu Sans Mono", monospace; }
.lcd .s16 { margin-right: auto; }
.speaker .s16, .lines .s16 { width: 13px; height: 13px; align-self: flex-start; }
.big { font-size: 26px; line-height: 26px; white-space: pre; }
.small { align-self: flex-end; font-size: 17px; line-height: 20px; }
.speaker .small { font-size: 20px; line-height: 24px; }
.clock .big { font-weight: 700; }
.clock .small { margin-left: 4px; }

.onair { display: flex; height: 57px; flex: none; background: #07889c; border-top: 1px solid #5ca8c4; border-bottom: 1px solid #93e1f6; }
.playing { flex: 1; min-width: 0; }
.playing p { display: flex; height: 33px; align-items: flex-end; font-family: "Liberation Sans", sans-serif; }
.playing strong { height: 32px; width: 105px; background: #ff2a05; color: #767f78; font-size: 28px; line-height: 31px; text-align: center; }
.playing span { margin-left: 9px; font-size: 13px; line-height: 15px; font-weight: 700; color: #a3584a; }
.waveform { position: relative; height: 14px; margin-top: 4px; background: linear-gradient(#054a57, #054a57) 0 1px / 100% 1px no-repeat, linear-gradient(#054a57, #054a57) 0 4px / 100% 1px no-repeat, linear-gradient(#054a57, #054a57) 0 7px / 100% 2px no-repeat, linear-gradient(#054a57, #054a57) 0 12px / 100% 1px no-repeat; }
.wave { display: block; width: 310px; height: 14px; }
.marker { position: absolute; left: 299px; top: -4px; width: 12px; height: 12px; }
.vu { width: 126px; height: 55px; flex: none; background: radial-gradient(ellipse at 50% 60%, #fff6cb 40%, #e9dfae 75%, #a9a47e); border-right: 1px solid #777; }
.mark { font: 8px "Liberation Sans", sans-serif; text-anchor: middle; fill: #333; }
.hot.mark { fill: #c9391e; }
.vulabel { font: 11px "Liberation Sans", sans-serif; fill: #111; text-anchor: middle; stroke: #111; stroke-width: .3; }

.panels { flex: 1; min-height: 0; display: grid; grid-template-columns: 435fr 434fr 478fr; padding-bottom: 2px; background: #c9dff8; }
.panel { position: relative; display: flex; flex-direction: column; min-width: 0; min-height: 0; padding-right: 7px; }
.phead { display: flex; align-items: center; flex: none; height: 27px; padding: 4px 2px 0 3px; background: linear-gradient(#d9e8fc, #b9d2f9 50%, #80a9ee); }
.phead h2 { flex: 1; padding-left: 2px; font-weight: 700; }
.phead button { width: 17px; }
.phead svg { width: 12px; height: 12px; }
.phead.hot { background: linear-gradient(#ffd089, #ffb24c); height: 28px; }

.schedule { flex: 1; min-height: 0; display: flex; background: #eef5fc; }
.blocks { flex: 1; min-width: 0; display: flex; flex-direction: column; gap: 2px; padding: 0 7px 0 5px; overflow: hidden; font: 12px/15px "DejaVu Sans", Verdana, sans-serif; }
.block { display: flex; flex: none; border-radius: 9px 0 0 9px; --c: #00a2ff; background: var(--c); }
.block.ads { --c: #04c47c; }
.past { border-top-left-radius: 0; }
.rail { width: 22px; flex: none; display: flex; justify-content: center; align-items: center; }
.rail span, .card b { writing-mode: vertical-rl; transform: rotate(180deg); font: 700 17px/20px "Liberation Sans", sans-serif; color: #0b2a52; }
.ads .rail span { color: #e6fff3; }
.rows { flex: 1; min-width: 0; border: solid var(--c); border-width: 0 2px 2px 0; }
.rows h3 { display: flex; justify-content: space-between; height: 16px; background: var(--c); font: 12px/16px "Liberation Sans", sans-serif; color: #063049; }
.ads .rows h3 { color: #06432c; }
.row { display: flex; align-items: center; background: #fff; }
.row .s16 { margin: 0 4px; color: #fff; }
.cell { flex: 1; min-width: 0; padding: 0 2px 0 4px; color: #26242c; white-space: pre; box-shadow: inset 0 -1px #e3e3ee; }
.cell p { height: 15px; line-height: 15px; }
.cell .played { height: 18px; line-height: 17px; font-style: italic; color: #8c3450; }
.past .row, .past .cell { background: #c2c2c4; }
.past .cell { box-shadow: inset 0 -1px #b4b4d0; }
.mint { background: #dcf7dc; }
.tint { background: #dedeff; }
.times { display: flex; justify-content: space-between; font: 12px/13px "Liberation Mono", monospace; color: #8e2f30; }
.tint .times, .row:last-child .times { line-height: 12px; }
.active { background: #056ae0; color: #c5ecff; box-shadow: none; }
.active .times { color: #c5ecff; }
.active mark { background: #0a18d6; color: #4c80ff; }
.card { position: relative; display: flex; align-items: flex-start; margin: 0 -8px 0 -7px; border: 1px solid #15205a; border-right: 0; border-radius: 5px 0 0 5px; overflow: hidden; }
.card b { align-self: stretch; width: 20px; margin-left: 2px; text-align: center; }
.card p { flex: 1; font-size: 17px; line-height: 20px; white-space: nowrap; }
.now { height: 60px; background: linear-gradient(#ff9a1c, #ff7a00); border-bottom-width: 2px; }
.now b { color: #ffe26a; }
.now p { padding: 4px 0 0 4px; color: #ffe9b0; }
.now .s32 { color: #ff9010; }
.left { display: flex; align-items: center; justify-content: flex-end; align-self: stretch; width: 76px; padding-right: 11px; background: linear-gradient(#0a1fa0, #000b66); border-left: 1px solid #352a6a; font: 700 12px/13px "Liberation Mono", monospace; color: #dfe6ff; }
.soon { height: 53px; background: linear-gradient(#fdf395, #ecd94f); }
.soon b { color: #ff9712; }
.soon p { padding: 4px 0 0 4px; color: #29260e; }
.soon .s32 { margin: 1px 0 0 -2px; }
.soon .times { position: absolute; left: 21px; right: 11px; bottom: 1px; color: #4b4420; }

.scroll { display: flex; flex-direction: column; align-items: center; width: 15px; flex: none; background: #f2f2f2; }
.scroll svg { width: 12px; height: 16px; flex: none; fill: none; stroke: #444; stroke-width: 1.6; }
.scroll i { width: 100%; background: #cbcbcb; }
.top i { height: 24px; margin: 8px 0 auto; }
.long i { height: 340px; margin-bottom: auto; }

.folders { flex: 1; min-height: 0; display: flex; flex-direction: column; border-left: 1px solid #6280b4; background: #fff; margin-top: 2px; }
.fbar { display: flex; align-items: center; flex: none; height: 27px; border-bottom: 2px solid #6d8fca; background: linear-gradient(#d7e6fc, #bbd4fa 50%, #93b6ee); }
.fbar > button { width: 22px; }
.fbar .grip { margin-left: 4px; }
.fbar > input { width: 15px; height: 21px; padding: 0 4px; border: 0; background: #fff; font: inherit; }
.fbar > .search { width: 99px; color: #333; }
.search::placeholder { color: #737373; }
.spin { display: flex; flex-direction: column; margin-left: 1px; }
.spin button { width: 15px; height: 9px; background: #eee; border: 1px solid #aaa; }
.spin svg { width: 8px; height: 4px; fill: #111; }
.fbar > .more { width: 11px; }
.find { border-bottom: 0; }
.fbody { flex: 1; min-height: 0; display: flex; }
.groups { flex: 1; min-width: 0; overflow: hidden; padding: 4px 11px 0 0; }
.group { margin-bottom: 4px; }
.group h3 { display: flex; align-items: center; gap: 4px; margin: 0 0 6px 10px; color: #3f5f9c; }
.group h3::after { content: ""; flex: 1; height: 1px; background: #c6d0e2; }
.items { display: grid; grid-template-columns: repeat(5, 74px); grid-auto-rows: 74px; margin-left: -2px; }
.items button { flex-direction: column; justify-content: flex-start; gap: 4px; }
.items span { width: 64px; text-align: center; color: #222; }
.items button:last-child:not(:first-child) span { width: 74px; }

.mixer { padding-right: 0; }
.strips { flex: 1; min-height: 0; display: grid; grid-template-columns: repeat(5, 1fr); gap: 4px; padding: 2px 1px 0; background: #b4d0d5; }
.strip { min-width: 0; display: flex; flex-direction: column; align-items: center; padding: 4px 3px 2px; background: #3f3f3f; border: 1px solid #303030; }
.strip h3 { width: 100%; height: 20px; font: 11px/20px "DejaVu Sans", sans-serif; text-align: center; background: #7aac98; border: solid #5f8778; border-width: 1px 0 0 1px; color: #1c3128; }
.knob { width: 30px; height: 30px; margin: 7px 0 6px; flex: none; }
.pair { display: flex; justify-content: space-between; width: 100%; }
.pair button, .cart { background: linear-gradient(#f0f0f0, #c6c6c6); border: 1px solid #aaa; }
.pair button { width: 38px; height: 25px; }
.pair svg { width: 20px; height: 18px; }
.rec { width: 15px; height: 15px; border-radius: 50%; background: #ecb4ac; }
.level { position: relative; width: 82px; height: 347px; margin: 7px 0 6px; flex: none; }
.leds { position: absolute; left: 0; top: 27px; width: 11px; height: 293px; display: flex; flex-direction: column; gap: 2px; }
.leds i { flex: 1; background: #555; }
.leds .lit { background: #0cae0c; }
.track { position: absolute; left: 25px; top: 0; width: 32px; height: 347px; border: 1px solid #777; border-radius: 8px; background: linear-gradient(#adadad, #adadad) 50% 23px / 9px 300px no-repeat, #5d5d5d; }
.scale { position: absolute; left: 22px; top: 0; width: 60px; height: 347px; overflow: visible; }
.scale text { font: 9px "DejaVu Sans", sans-serif; fill: #eee; }
.scale .inf { font-size: 12px; font-weight: 700; }
.fader { position: absolute; left: -11px; top: -1px; width: 52px; height: 347px; margin: 0; appearance: none; background: none; writing-mode: vertical-lr; direction: rtl; z-index: 1; }
.fader::-webkit-slider-thumb { appearance: none; width: 52px; height: 62px; background: linear-gradient(#d0d0d0, #d0d0d0) 50% 30px / 52px 2px no-repeat, linear-gradient(#777 0 5px, #303030 5px 12px, #050505 12px 19px, #303030 19px 38px, #555 38px 40px, #777 40px 47px, #4a4a4a 47px 51px, #242424 51px) 50% 0 / 30px 62px no-repeat; }
.cart { position: relative; width: 100%; flex: 1; min-height: 40px; align-items: flex-start; justify-content: space-between; padding: 4px; color: #111; font: 15px/18px "DejaVu Sans", sans-serif; }
.cart svg { width: 28px; height: 28px; margin: 3px 2px 0 0; }
.cart.live { background: linear-gradient(#a3d8a3, #78be78); }
.cart .badge { position: absolute; right: 8px; top: 2px; width: 40px; height: 40px; margin: 0; }
.mr { font: italic 700 17px "Liberation Sans", sans-serif; fill: #fff; }
.web { font: italic 700 5px "Liberation Sans", sans-serif; fill: #eee; text-anchor: middle; }
.pointer { position: absolute; left: 199px; top: 215px; width: 12px; height: 20px; z-index: 2; }
</style>
